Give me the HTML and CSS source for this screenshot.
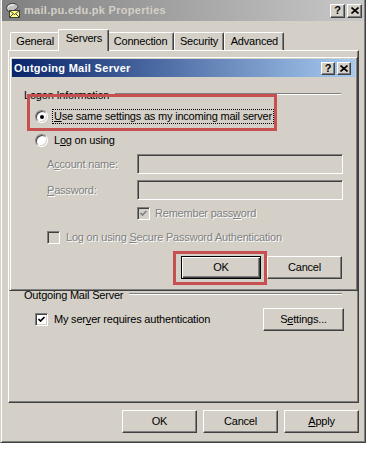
FILE: index.html
```html
<!DOCTYPE html>
<html lang="en">
<head>
    <meta charset="UTF-8">
    <title>mail.pu.edu.pk Properties</title>
    <link rel="stylesheet" href="styles.css">
</head>
<body>
<div class="window">
    <div class="titlebar">
        <svg class="app-icon" width="17" height="17" viewBox="0 0 17 17">
            <path d="M1.5 6.5 C1.5 3 5 1 9 1.5 C12 2 13.5 4 12.5 6 L9 8.5 L3 9.5 Z" fill="#c0c0c0" stroke="#404040"/>
            <path d="M3 5.5 C3.5 3.5 6 2.5 9 3" fill="none" stroke="#fff"/>
            <rect x="4.5" y="8.5" width="10" height="7" fill="#ffff80" stroke="#404040"/>
            <path d="M4.5 8.5 L9.5 12.5 L14.5 8.5 M4.5 15.5 L8 12 M14.5 15.5 L11 12" fill="none" stroke="#404040"/>
        </svg>
        <span class="title-text">mail.pu.edu.pk Properties</span>
        <span class="caption-btn">?</span>
        <span class="caption-btn close">
            <svg width="8" height="7" viewBox="0 0 8 7"><path d="M0.5 0.5 L7.5 6.5 M7.5 0.5 L0.5 6.5" stroke="#000" stroke-width="1.6"/></svg>
        </span>
    </div>

    <div class="tabs">
        <div class="tab">General</div>
        <div class="tab active">Servers</div>
        <div class="tab">Connection</div>
        <div class="tab">Security</div>
        <div class="tab">Advanced</div>
    </div>

    <div class="panel">
        <!-- the upper part of the tab is covered by the dialog -->
        <div class="covered"></div>
        <div class="group-head">
            <span>Outgoing Mail Server</span>
            <div class="etch"></div>
        </div>
        <div class="auth-row">
            <span class="check">
                <svg width="9" height="9" viewBox="0 0 9 9"><path d="M1.5 4 L3.5 6 L7.5 2" fill="none" stroke="#000" stroke-width="1.7"/></svg>
            </span>
            <span class="auth-label">My ser<u>v</u>er requires authentication</span>
            <button class="btn settings">S<u>e</u>ttings...</button>
        </div>
    </div>

    <div class="footer">
        <button class="btn">OK</button>
        <button class="btn">Cancel</button>
        <button class="btn"><u>A</u>pply</button>
    </div>

    <!-- Outgoing Mail Server dialog on top -->
    <div class="dialog">
        <div class="dialog-title">
            <span class="title-text">Outgoing Mail Server</span>
            <span class="caption-btn small">?</span>
            <span class="caption-btn small close">
                <svg width="8" height="7" viewBox="0 0 8 7"><path d="M0.5 0.5 L7.5 6.5 M7.5 0.5 L0.5 6.5" stroke="#000" stroke-width="1.6"/></svg>
            </span>
        </div>
        <div class="dialog-body">
            <div class="group-head first">
                <span>Logon Information</span>
                <div class="etch"></div>
            </div>
            <div class="radio-row first">
                <span class="radio on"></span>
                <span class="radio-label focus"><u>U</u>se same settings as my incoming mail server</span>
            </div>
            <div class="radio-row">
                <span class="radio"></span>
                <span class="radio-label">L<u>o</u>g on using</span>
            </div>
            <div class="field-row">
                <span class="field-label disabled">A<u>c</u>count name:</span>
                <span class="field-input"></span>
            </div>
            <div class="field-row">
                <span class="field-label disabled"><u>P</u>assword:</span>
                <span class="field-input"></span>
            </div>
            <div class="check-row remember">
                <span class="check off">
                    <svg width="9" height="9" viewBox="0 0 9 9"><path d="M1.5 4 L3.5 6 L7.5 2" fill="none" stroke="#808080" stroke-width="1.7"/></svg>
                </span>
                <span class="check-label disabled">Remember pass<u>w</u>ord</span>
            </div>
            <div class="check-row spa">
                <span class="check off"></span>
                <span class="check-label disabled">Log on using <u>S</u>ecure Password Authentication</span>
            </div>
            <div class="dialog-buttons">
                <button class="btn default">OK</button>
                <button class="btn">Cancel</button>
            </div>
        </div>
    </div>

    <!-- red marks drawn over the screenshot -->
    <div class="mark mark-radio"></div>
    <div class="mark mark-ok"></div>
</div>
</body>
</html>
```

FILE: styles.css
```css
body {
    margin: 0;
    background: #fff;
    font-family: "Liberation Sans", Arial, sans-serif;
    font-size: 11px;
    line-height: 13px;
    letter-spacing: -0.2px;
    color: #000;
}

/* outer properties window */
.window {
    position: relative;
    width: 366px;
    height: 443px;
    box-sizing: border-box;
    background: #d4d0c8;
    border: 1px solid;
    border-top: 0;
    border-color: #d4d0c8 #404040 #404040 #d4d0c8;
    box-shadow: inset 1px 0 #fff, inset -1px -1px #808080;
    padding: 0 1px 1px;
}

.titlebar {
    display: flex;
    align-items: center;
    height: 21px;
    padding: 0 2px 0 3px;
    background: linear-gradient(to right, #808080, #c8c8c8);
}
.app-icon {
    flex: none;
}
.title-text {
    flex: 1;
    margin-left: 2px;
    font-weight: bold;
    letter-spacing: 0.3px;
    color: #d4d0c8;
}

.caption-btn {
    display: flex;
    align-items: center;
    justify-content: center;
    width: 15px;
    height: 14px;
    box-sizing: border-box;
    background: #d4d0c8;
    border: 1px solid;
    border-color: #fff #404040 #404040 #fff;
    box-shadow: inset -1px -1px #808080;
    font-weight: bold;
    font-size: 11px;
    letter-spacing: 0;
    color: #000;
}
.caption-btn.close {
    margin-left: 2px;
}
.caption-btn.small {
    width: 14px;
    height: 13px;
}

/* tabs */
.tabs {
    display: flex;
    align-items: flex-end;
    height: 21px;
    margin: 8px 0 0 8px;
}
.tab {
    height: 18px;
    box-sizing: border-box;
    padding: 2px 5.3px 0;
    border: 1px solid #fff;
    border-right-color: #404040;
    border-bottom: 0;
    border-radius: 2px 2px 0 0;
    box-shadow: inset -1px 0 #808080;
}
.tab.active {
    position: relative;
    z-index: 1;
    height: 22px;
    margin: 0 -2px -1px;
    padding: 2px 6.3px 0;
    background: #d4d0c8;
}

.panel {
    height: 353px;
    box-sizing: border-box;
    margin: 0 5px 0 6px;
    padding: 0 14px 0 15px;
    border: 1px solid;
    border-color: #fff #404040 #404040 #fff;
    box-shadow: inset -1px -1px #808080;
}
.covered {
    height: 238px;
}

.group-head {
    display: flex;
    height: 13px;
}
.etch {
    flex: 1;
    height: 0;
    margin: 4px 2px 0 6px;
    border-top: 1px solid #808080;
    border-bottom: 1px solid #fff;
}

.auth-row {
    display: flex;
    align-items: center;
    height: 23px;
    margin-top: 6px;
}
.auth-row .check {
    margin-left: 11px;
}
.auth-label {
    margin-left: 6px;
}
.btn.settings {
    width: 81px;
    margin-left: auto;
}

.footer {
    display: flex;
    justify-content: flex-end;
    gap: 6px;
    margin: 7px 5px 0 0;
}

/* controls */
.btn {
    width: 75px;
    height: 23px;
    box-sizing: border-box;
    padding: 0;
    background: #d4d0c8;
    border: 1px solid;
    border-color: #fff #404040 #404040 #fff;
    box-shadow: inset -1px -1px #808080;
    font: inherit;
    letter-spacing: inherit;
    color: #000;
}
.btn.default {
    width: 80px;
    border-color: #000;
    box-shadow: inset 1px 1px #fff, inset -1px -1px #404040, inset -2px -2px #808080;
}

.check {
    display: flex;
    align-items: center;
    justify-content: center;
    flex: none;
    width: 13px;
    height: 13px;
    box-sizing: border-box;
    background: #fff;
    border: 1px solid;
    border-color: #808080 #fff #fff #808080;
    box-shadow: inset 1px 1px #404040, inset -1px -1px #d4d0c8;
}
.check.off {
    background: #d4d0c8;
}

.radio {
    position: relative;
    flex: none;
    width: 13px;
    height: 13px;
    box-sizing: border-box;
    border-radius: 50%;
    background: #fff;
    border: 1px solid;
    border-color: #808080 #fff #fff #808080;
    box-shadow: inset 1px 1px #404040, inset -1px -1px #d4d0c8;
}
.radio.on::after {
    content: "";
    position: absolute;
    left: 3.5px;
    top: 3.5px;
    width: 4px;
    height: 4px;
    border-radius: 50%;
    background: #000;
}

.disabled {
    color: #808080;
    text-shadow: 1px 1px 0 #fff;
}

/* dialog on top */
.dialog {
    position: absolute;
    left: 8px;
    top: 56px;
    width: 349px;
    height: 235px;
    box-sizing: border-box;
    padding: 2px;
    background: #d4d0c8;
    border: 1px solid;
    border-color: #d4d0c8 #404040 #404040 #d4d0c8;
    box-shadow: inset 1px 1px #fff, inset -1px -1px #808080;
}
.dialog-title {
    display: flex;
    align-items: center;
    height: 18px;
    padding: 0 4px 0 0;
    background: linear-gradient(to right, #0a246a, #a6caf0);
}
.dialog-title .title-text {
    color: #fff;
}
.dialog-body {
    padding: 0 12px;
}
.group-head.first {
    margin-top: 12px;
}

.radio-row {
    display: flex;
    align-items: center;
    height: 15px;
    margin: 9px 0 0 11px;
}
.radio-row.first {
    margin-top: 7px;
}
.radio-label {
    margin-left: 4px;
    padding: 0 1px;
    border: 1px dotted transparent;
}
.radio-label.focus {
    border-color: #000;
}

.field-row {
    display: flex;
    align-items: center;
    height: 20px;
    margin: 6px 0 0 23px;
}
.field-label {
    width: 90px;
}
.field-input {
    flex: 1;
    height: 20px;
    box-sizing: border-box;
    background: #d4d0c8;
    border: 1px solid;
    border-color: #808080 #fff #fff #808080;
    box-shadow: inset 1px 1px #404040, inset -1px -1px #d4d0c8;
}

.check-row {
    display: flex;
    align-items: center;
    height: 13px;
}
.check-row.remember {
    margin: 7px 0 0 113px;
}
.check-row.remember .check-label {
    margin-left: 5px;
}
.check-row.spa {
    margin: 11px 0 0 23px;
}
.check-row.spa .check-label {
    margin-left: 6px;
}

.dialog-buttons {
    display: flex;
    justify-content: flex-end;
    gap: 6px;
    margin: 12px 1px 0 0;
}

/* red highlight marks */
.mark {
    position: absolute;
    box-sizing: border-box;
    border: 3px solid #c65050;
}
.mark-radio {
    left: 26px;
    top: 94px;
    width: 250px;
    height: 37px;
}
.mark-ok {
    left: 172px;
    top: 251px;
    width: 94px;
    height: 34px;
}
```
